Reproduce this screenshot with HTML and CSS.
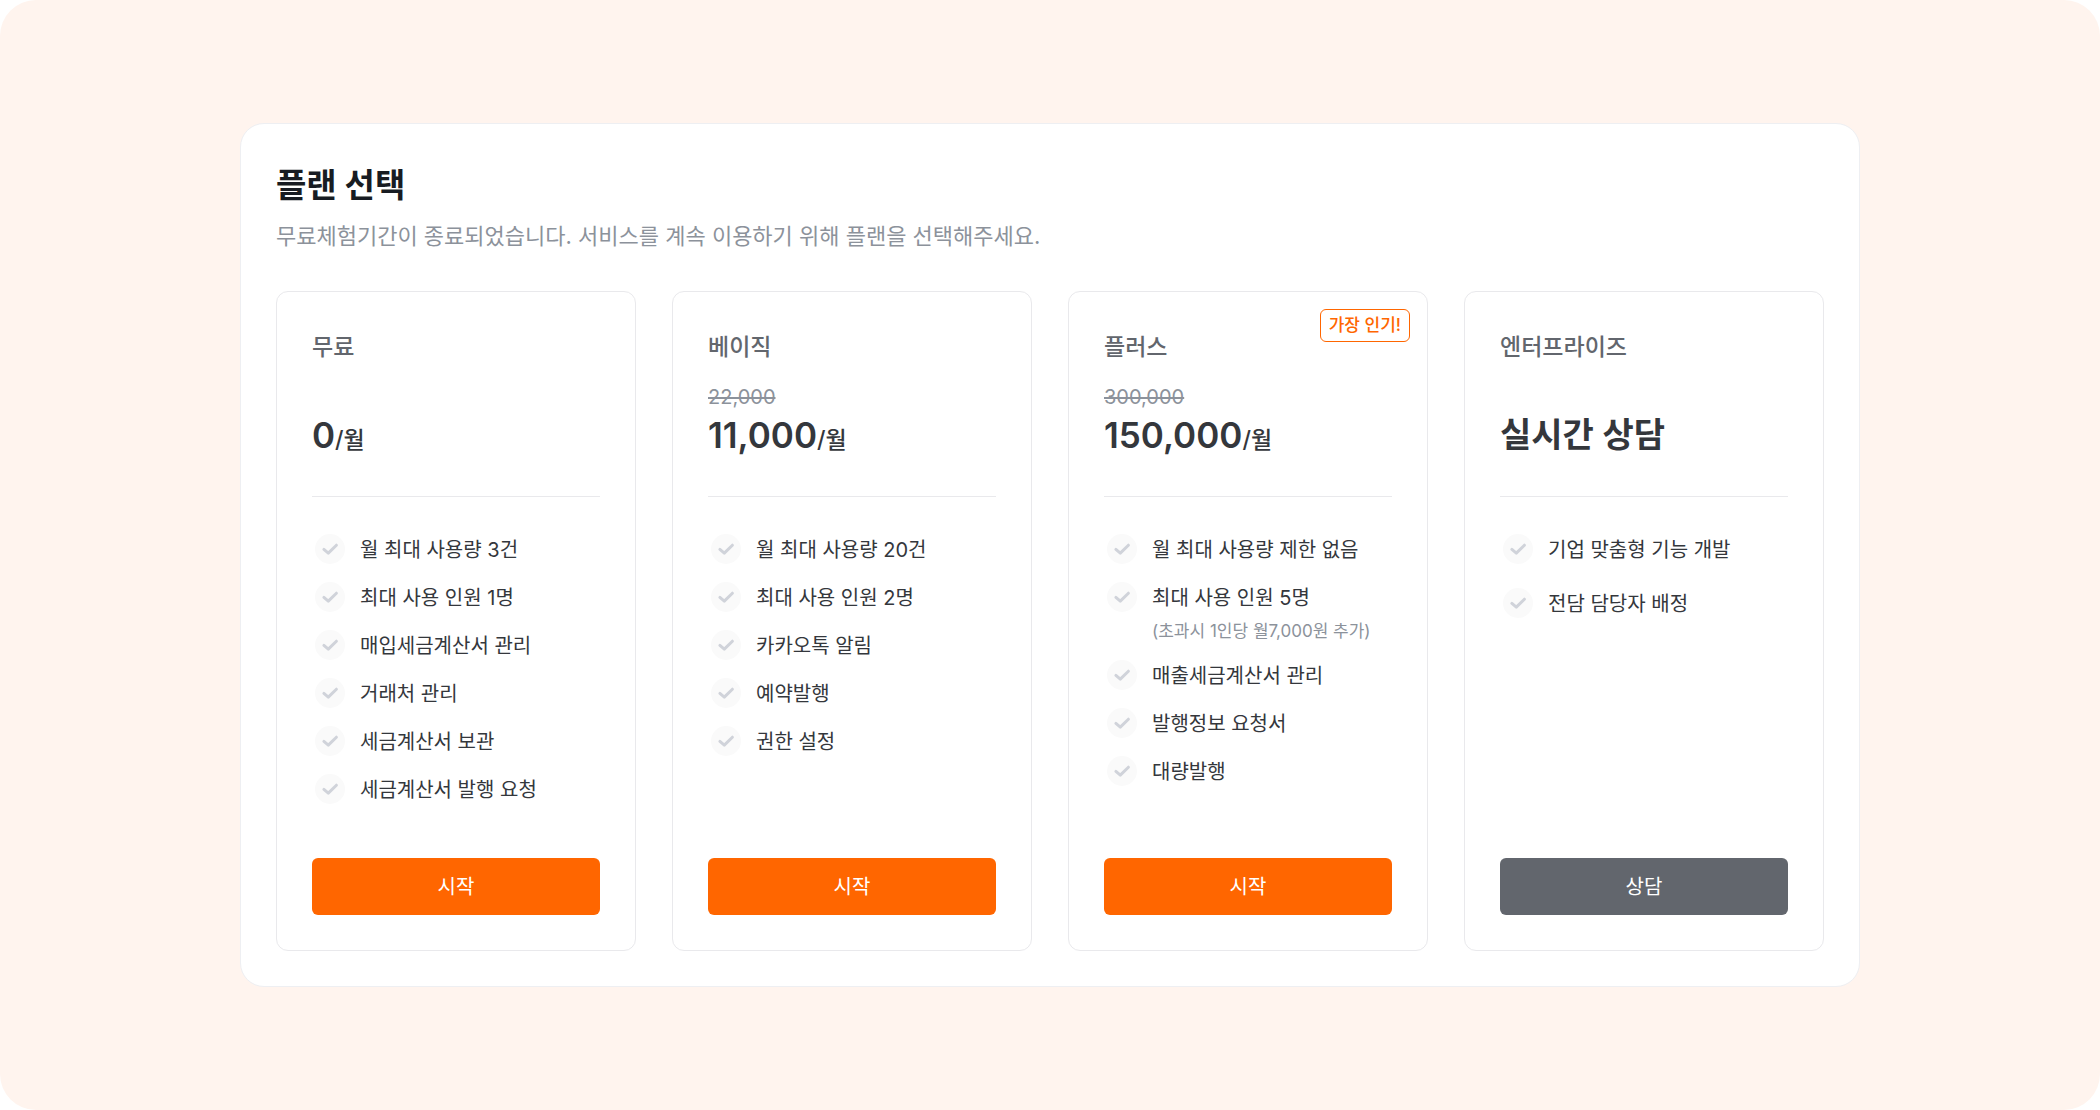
FILE: index.html
```html
<!DOCTYPE html>
<html lang="ko">
<head>
<meta charset="utf-8">
<meta name="viewport" content="width=device-width, initial-scale=1">
<title>플랜 선택</title>
<link rel="stylesheet" href="styles.css">
</head>
<body>
<svg class="sprite" aria-hidden="true">
  <symbol id="check" viewBox="0 0 30 30">
    <circle cx="15" cy="15" r="15" fill="#fafafa"/>
    <path d="M8.9 15.4 13.3 19.1 21.4 11.2" fill="none" stroke="#d0d3da" stroke-width="3" stroke-linecap="round" stroke-linejoin="round"/>
  </symbol>
</svg>
<main class="page">
  <section class="panel">
    <header class="intro">
      <h1 class="title">플랜 선택</h1>
      <p class="subtitle">무료체험기간이 종료되었습니다. 서비스를 계속 이용하기 위해 플랜을 선택해주세요.</p>
    </header>
    <div class="plans">
      <article class="plan">
        <h2 class="name">무료</h2>
        <div class="pricing">
          <p class="price">0<span class="unit">/월</span></p>
        </div>
        <ul class="features">
          <li><svg class="check"><use href="#check"/></svg><span class="label">월 최대 사용량 3건</span></li>
          <li><svg class="check"><use href="#check"/></svg><span class="label">최대 사용 인원 1명</span></li>
          <li><svg class="check"><use href="#check"/></svg><span class="label">매입세금계산서 관리</span></li>
          <li><svg class="check"><use href="#check"/></svg><span class="label">거래처 관리</span></li>
          <li><svg class="check"><use href="#check"/></svg><span class="label">세금계산서 보관</span></li>
          <li><svg class="check"><use href="#check"/></svg><span class="label">세금계산서 발행 요청</span></li>
        </ul>
        <button class="action" type="button">시작</button>
      </article>
      <article class="plan">
        <h2 class="name">베이직</h2>
        <div class="pricing">
          <del class="was">22,000</del>
          <p class="price">11,000<span class="unit">/월</span></p>
        </div>
        <ul class="features">
          <li><svg class="check"><use href="#check"/></svg><span class="label">월 최대 사용량 20건</span></li>
          <li><svg class="check"><use href="#check"/></svg><span class="label">최대 사용 인원 2명</span></li>
          <li><svg class="check"><use href="#check"/></svg><span class="label">카카오톡 알림</span></li>
          <li><svg class="check"><use href="#check"/></svg><span class="label">예약발행</span></li>
          <li><svg class="check"><use href="#check"/></svg><span class="label">권한 설정</span></li>
        </ul>
        <button class="action" type="button">시작</button>
      </article>
      <article class="plan">
        <span class="badge">가장 인기!</span>
        <h2 class="name">플러스</h2>
        <div class="pricing">
          <del class="was">300,000</del>
          <p class="price">150,000<span class="unit">/월</span></p>
        </div>
        <ul class="features">
          <li><svg class="check"><use href="#check"/></svg><span class="label">월 최대 사용량 제한 없음</span></li>
          <li><svg class="check"><use href="#check"/></svg><span class="label">최대 사용 인원 5명<small class="note">(초과시 1인당 월7,000원 추가)</small></span></li>
          <li><svg class="check"><use href="#check"/></svg><span class="label">매출세금계산서 관리</span></li>
          <li><svg class="check"><use href="#check"/></svg><span class="label">발행정보 요청서</span></li>
          <li><svg class="check"><use href="#check"/></svg><span class="label">대량발행</span></li>
        </ul>
        <button class="action" type="button">시작</button>
      </article>
      <article class="plan">
        <h2 class="name">엔터프라이즈</h2>
        <div class="pricing">
          <p class="price price-text">실시간 상담</p>
        </div>
        <ul class="features features-wide">
          <li><svg class="check"><use href="#check"/></svg><span class="label">기업 맞춤형 기능 개발</span></li>
          <li><svg class="check"><use href="#check"/></svg><span class="label">전담 담당자 배정</span></li>
        </ul>
        <button class="action action-gray" type="button">상담</button>
      </article>
    </div>
  </section>
</main>
</body>
</html>
```
FILE: styles.css
```css
* {
  box-sizing: border-box;
}

body {
  margin: 0;
  background: #fff;
  color: #34373c;
  font-family: Inter, "Noto Sans CJK KR", sans-serif;
  font-size: 20px;
  line-height: 36px;
}

h1, h2, p, ul {
  margin: 0;
  padding: 0;
}

.sprite {
  position: absolute;
  width: 0;
  height: 0;
}

.page {
  display: flex;
  align-items: center;
  justify-content: center;
  min-height: 100vh;
  padding: 36px;
  border-radius: 36px;
  background: #fff4ee;
}

.panel {
  width: 100%;
  max-width: 1620px;
  padding: 35px;
  border: 1px solid #eeeff2;
  border-radius: 24px;
  background: #fff;
}

.intro {
  margin-bottom: 37px;
}

.title {
  margin-bottom: 7px;
  color: #181c22;
  font-size: 33px;
  line-height: 52px;
  font-weight: 700;
}

.subtitle {
  color: #8c929b;
  font-size: 22px;
}

.plans {
  display: grid;
  grid-template-columns: repeat(auto-fit, minmax(300px, 1fr));
  gap: 36px;
}

.plan {
  position: relative;
  display: flex;
  flex-direction: column;
  padding: 35px;
  border: 1px solid #e9e9ec;
  border-radius: 12px;
}

.badge {
  position: absolute;
  top: 17px;
  right: 17px;
  padding: 0 8px;
  border: 1px solid #ff6600;
  border-radius: 6px;
  color: #ff6600;
  font-size: 17px;
  line-height: 31px;
  font-weight: 500;
}

.name {
  margin-bottom: 14px;
  color: #62666d;
  font-size: 23px;
  line-height: 40px;
  font-weight: 500;
}

.pricing {
  display: flex;
  flex-direction: column;
  justify-content: flex-end;
  min-height: 116px;
  padding-bottom: 38px;
  border-bottom: 1px solid #e9e9ec;
}

.was {
  color: #8c929b;
  font-size: 20px;
  line-height: 30px;
}

.price {
  font-size: 35px;
  line-height: 46px;
  font-weight: 600;
}

.price-text {
  font-size: 34px;
}

.unit {
  font-size: 23px;
  line-height: 24px;
  font-weight: 500;
}

.features {
  display: flex;
  flex-direction: column;
  gap: 11px;
  margin: 34px 0 50px;
  list-style: none;
}

.features-wide {
  gap: 17px;
}

.features li {
  display: flex;
  gap: 15px;
  padding-left: 3px;
}

.label {
  padding-top: 1px;
}

.check {
  flex: none;
  width: 30px;
  height: 30px;
  margin: 3px 0;
}

.note {
  display: block;
  color: #8c929b;
  font-size: 17px;
  line-height: 30px;
}

.action {
  margin-top: auto;
  padding: 2px 0 0;
  border: 0;
  border-radius: 6px;
  background: #ff6600;
  color: #fff;
  font: inherit;
  line-height: 55px;
  cursor: pointer;
}

.action-gray {
  background: #62666d;
}
```
